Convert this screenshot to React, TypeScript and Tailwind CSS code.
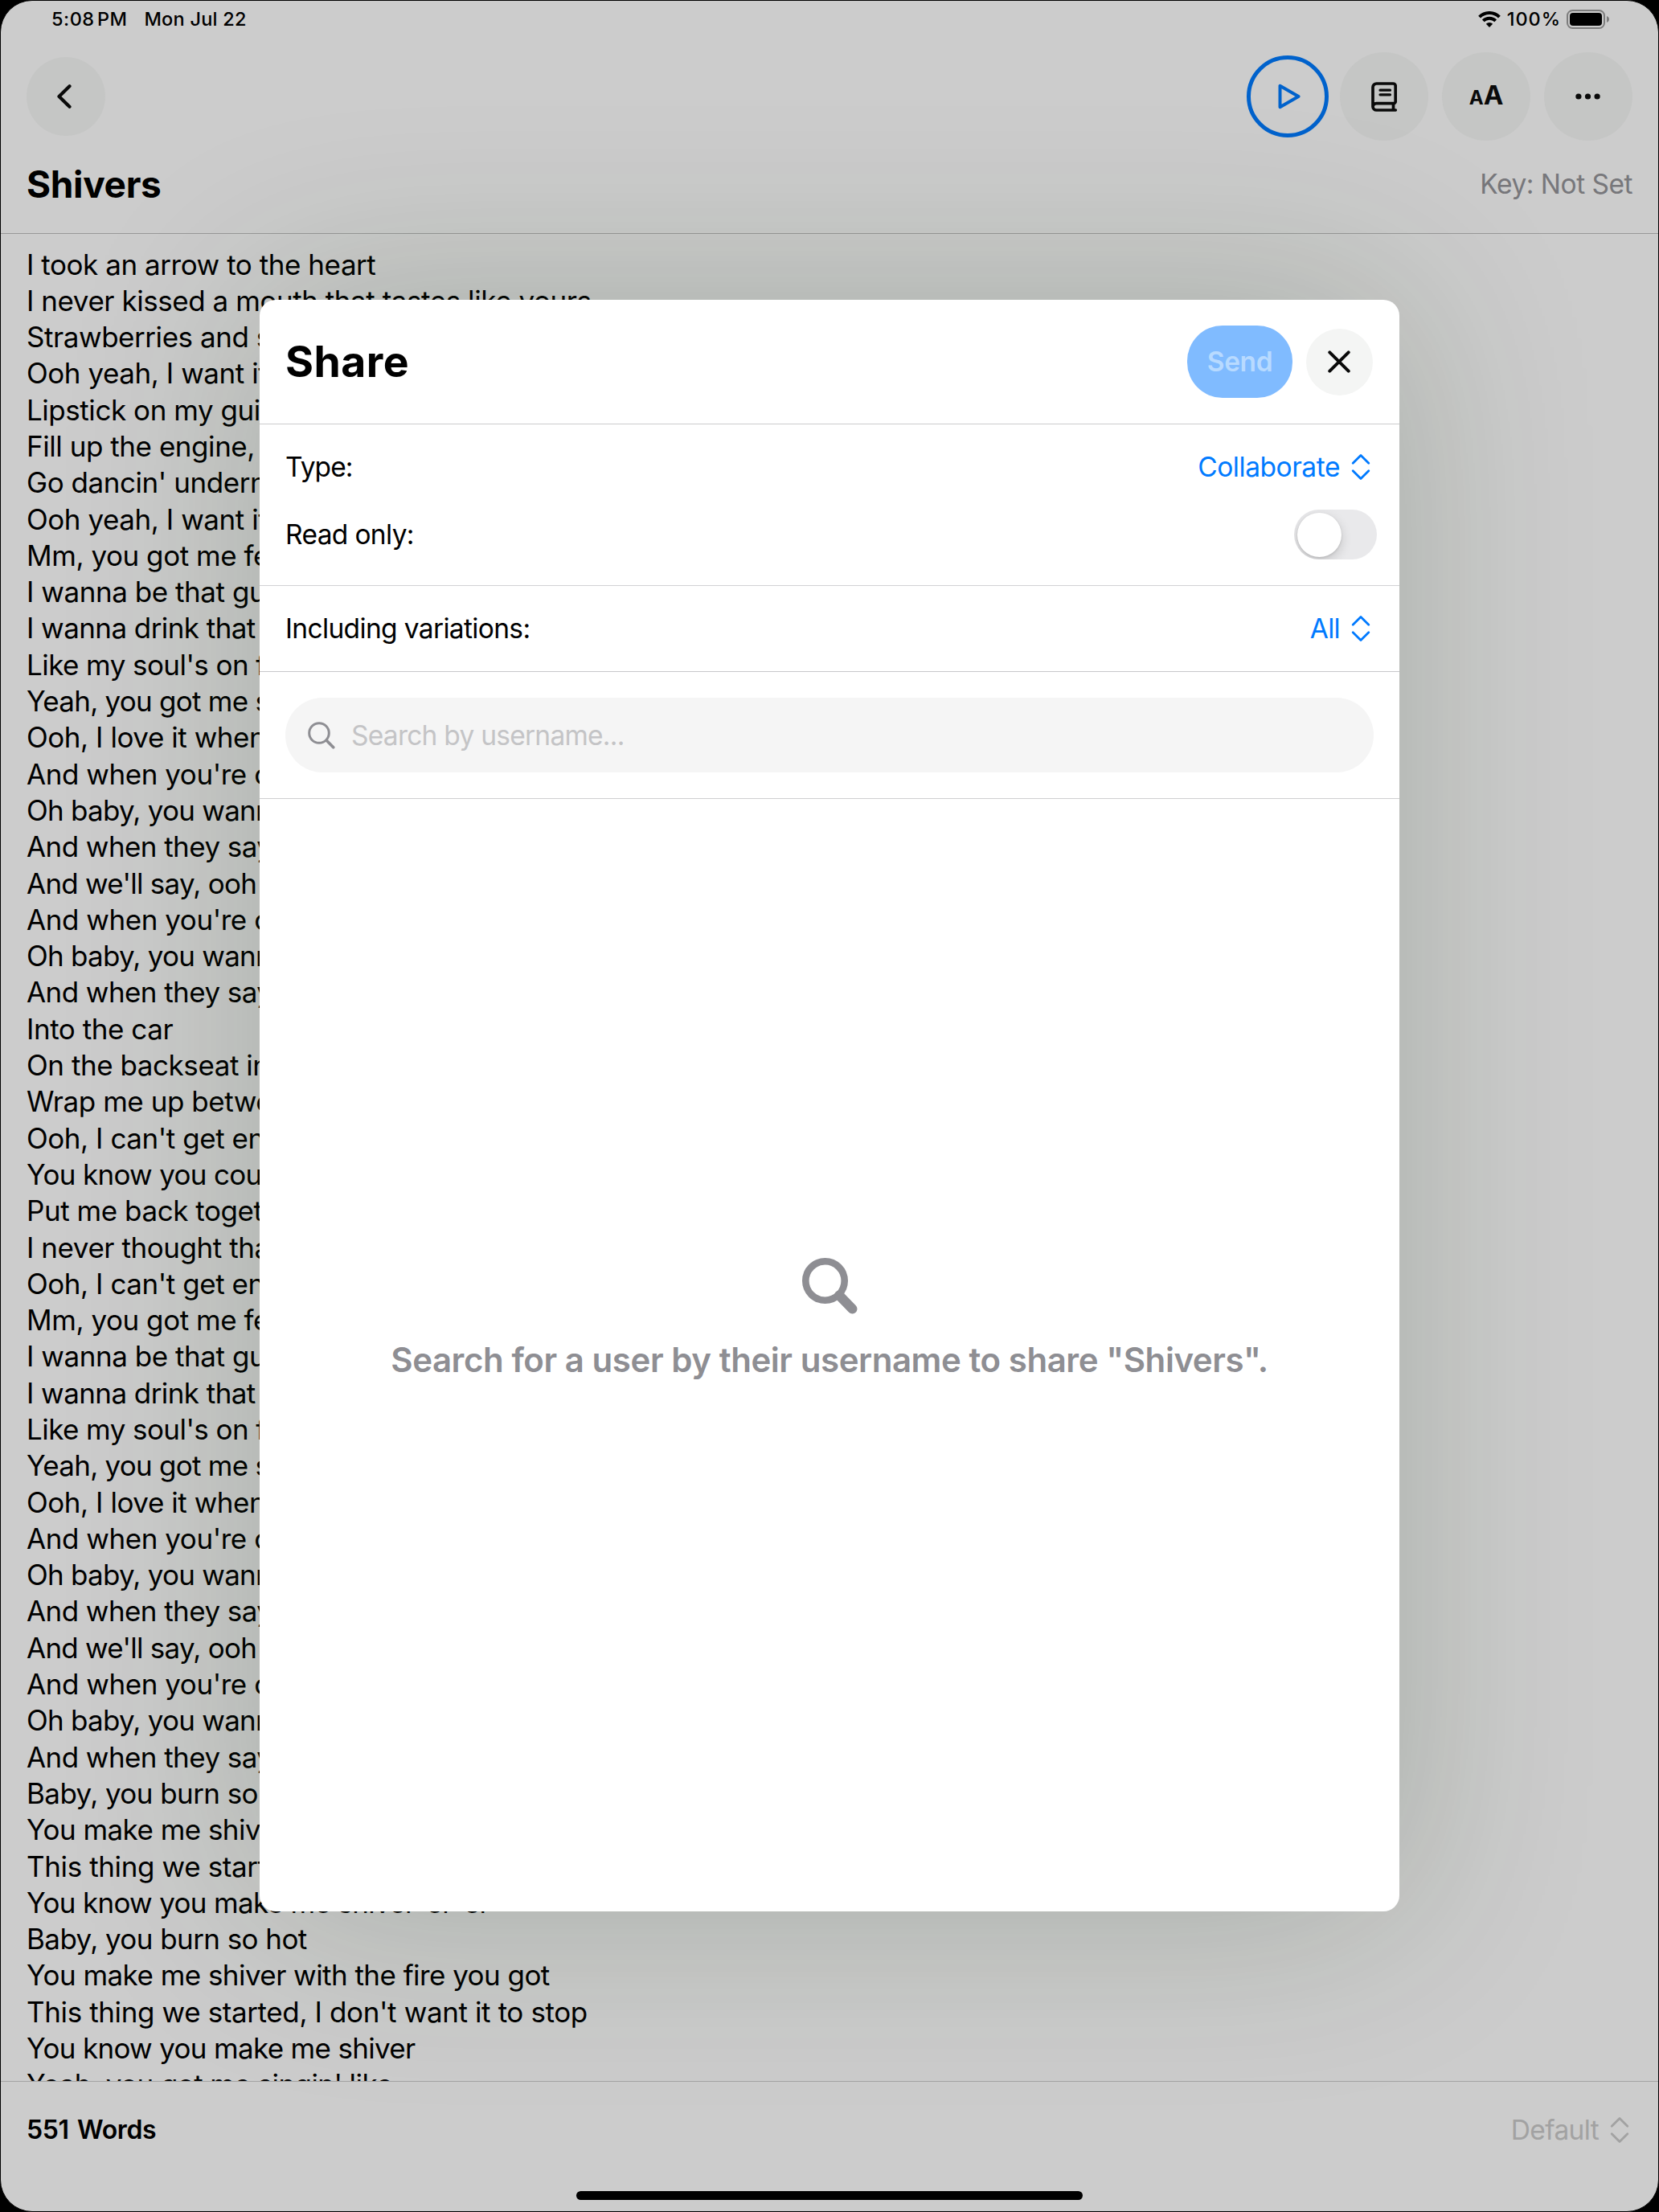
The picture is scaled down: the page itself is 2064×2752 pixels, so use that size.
import type { ReactNode } from "react";

const lyrics = [
  "I took an arrow to the heart",
  "I never kissed a mouth that tastes like yours",
  "Strawberries and s",
  "Ooh yeah, I want it",
  "Lipstick on my gui",
  "Fill up the engine,",
  "Go dancin' undern",
  "Ooh yeah, I want it",
  "Mm, you got me fe",
  "I wanna be that gu",
  "I wanna drink that",
  "Like my soul's on f",
  "Yeah, you got me s",
  "Ooh, I love it when",
  "And when you're c",
  "Oh baby, you wann",
  "And when they say",
  "And we'll say, ooh",
  "And when you're c",
  "Oh baby, you wann",
  "And when they say",
  "Into the car",
  "On the backseat in",
  "Wrap me up betwe",
  "Ooh, I can't get en",
  "You know you coul",
  "Put me back toget",
  "I never thought tha",
  "Ooh, I can't get en",
  "Mm, you got me fe",
  "I wanna be that gu",
  "I wanna drink that",
  "Like my soul's on f",
  "Yeah, you got me s",
  "Ooh, I love it when",
  "And when you're c",
  "Oh baby, you wann",
  "And when they say",
  "And we'll say, ooh",
  "And when you're c",
  "Oh baby, you wann",
  "And when they say",
  "Baby, you burn so",
  "You make me shive",
  "This thing we start",
  "You know you make me shiver-er-er",
  "Baby, you burn so hot",
  "You make me shiver with the fire you got",
  "This thing we started, I don't want it to stop",
  "You know you make me shiver",
  "Yeah, you got me singin' like",
];

function tracking(line: string) {
  if (line.startsWith("You know")) return "tracking-[-0.68px]";
  if (line.startsWith("You make")) return "tracking-[-0.55px]";
  if (line.startsWith("This")) return "tracking-[-0.38px]";
  if (/^(Oh baby|And we'll|Yeah, you got me s$)/.test(line)) return "tracking-[-0.75px]";
  if (/^(Yeah|Like|And when they|I wanna drink|Baby)/.test(line)) return "tracking-[-0.57px]";
  return "tracking-[-0.45px]";
}

function UpDown() {
  return (
    <svg width="24" height="34" viewBox="0 0 24 34" fill="none" stroke="currentColor" strokeWidth="2.8" strokeLinecap="round" strokeLinejoin="round">
      <path d="M2.2 12.2 12 2.4l9.8 9.8M2.2 21.8 12 31.6l9.8-9.8" />
    </svg>
  );
}

function RoundButton({ children }: { children: ReactNode }) {
  return (
    <button className="flex size-[110px] items-center justify-center rounded-full bg-[#c5c6c5]">{children}</button>
  );
}

function StatusBar() {
  return (
    <div className="flex h-[45px] items-center justify-between pl-[63px] pr-[61px] text-[23.5px] leading-[28px] font-medium">
      <div className="flex gap-[21px]">
        <span className="tracking-[0.5px] [word-spacing:-3.5px]">5:08 PM</span>
        <span className="tracking-[0.25px]">Mon Jul 22</span>
      </div>
      <div className="flex items-center">
        <svg width="28" height="20" viewBox="0 0 28 20" fill="none" stroke="#000" className="mr-[8px]">
          <path d="M1.6 7.1a17.6 17.6 0 0 1 24.8 0" strokeWidth="4" />
          <path d="M6.3 11.9a11 11 0 0 1 15.4 0" strokeWidth="3.8" />
          <path d="M14 20l-4.2-4.3a6 6 0 0 1 8.4 0z" fill="#000" stroke="none" />
        </svg>
        <span className="mr-[7px] tracking-[0.95px]">100%</span>
        <svg width="53" height="24" viewBox="0 0 53 24">
          <rect x="1" y="1" width="46" height="22" rx="6.5" fill="none" stroke="#7d7d7d" strokeWidth="2" />
          <rect x="4" y="4" width="40" height="16" rx="4" />
          <path d="M50 8v8c1.8-.7 3-2.2 3-4s-1.2-3.3-3-4z" fill="#7d7d7d" />
        </svg>
      </div>
    </div>
  );
}

function Toolbar() {
  return (
    <div className="flex h-[148px] items-center justify-between px-[32px]">
      <button className="flex size-[98px] items-center justify-center rounded-full bg-[#c5c6c5]">
        <svg width="18" height="30" viewBox="0 0 18 30" fill="none" stroke="#0a0a0a" strokeWidth="4.2" strokeLinecap="round" strokeLinejoin="round" className="-ml-[4px]">
          <path d="M15.5 2.3 2.5 15l13 12.7" />
        </svg>
      </button>
      <div className="flex items-center">
        <button className="mr-[14px] flex size-[102px] items-center justify-center rounded-full border-[5px] border-[#0062cc] text-[#0062cc]">
          <svg width="28" height="32" viewBox="0 0 28 32" fill="none" stroke="currentColor" strokeWidth="4" strokeLinejoin="round" className="ml-[4px]">
            <path d="M2.5 2.8v26.4L25.5 16z" />
          </svg>
        </button>
        <div className="flex gap-[17px]">
          <RoundButton>
            <svg width="32" height="37" viewBox="0 0 32 37" fill="none" stroke="#0a0a0a" strokeWidth="3.7" strokeLinecap="round" strokeLinejoin="round">
              <path d="M30.2 35H6.5a4.5 4.5 0 0 1-4.5-4.5V6.5A4.5 4.5 0 0 1 6.5 2h20.7a3 3 0 0 1 3 3v19.2a2.5 2.5 0 0 1-2.5 2.5H6.5A4.3 4.3 0 0 0 2 31" />
              <path d="M27.5 27v7.5" strokeLinecap="butt" />
              <path d="M11 10.2h12.5M11 15.8h12.5" strokeWidth="3.2" />
            </svg>
          </RoundButton>
          <RoundButton>
            <span className="flex items-baseline font-bold leading-[36px] text-[#0a0a0a]">
              <span className="text-[24px]">A</span>
              <span className="text-[33px]">A</span>
            </span>
          </RoundButton>
          <RoundButton>
            <svg width="31" height="8" viewBox="0 0 31 8" fill="#0a0a0a" className="mr-[1px]">
              <circle cx="3.9" cy="4" r="3.6" />
              <circle cx="15.5" cy="4" r="3.6" />
              <circle cx="27.1" cy="4" r="3.6" />
            </svg>
          </RoundButton>
        </div>
      </div>
    </div>
  );
}

function ShareDialog() {
  return (
    <div className="flex h-[2005px] w-[1418px] flex-col overflow-hidden rounded-[20px] bg-white text-[33.5px] leading-[42px] text-black">
      <div className="flex h-[155px] items-center justify-between border-b border-[#cbcbcd] pl-[32px] pr-[33px]">
        <h2 className="text-[53.5px] leading-[64px] font-bold tracking-[0.45px]">Share</h2>
        <div className="flex items-center gap-[17px]">
          <button className="flex h-[90px] w-[131px] items-center justify-center rounded-[44px] bg-[#80bbff] font-semibold tracking-[-0.4px] text-[#b8daff]">
            Send
          </button>
          <button className="flex size-[83px] items-center justify-center rounded-full bg-[#f4f5f4]">
            <svg width="28" height="28" viewBox="0 0 28 28" stroke="#0a0a0a" strokeWidth="4" strokeLinecap="round" className="mr-[1px]">
              <path d="M2.3 2.3l23.4 23.4M25.7 2.3 2.3 25.7" />
            </svg>
          </button>
        </div>
      </div>

      <div className="flex h-[201px] flex-col border-b border-[#d2d2d4] pt-[10px]">
        <div className="flex h-[85px] items-center justify-between pl-[32px] pr-[36px]">
          <span className="tracking-[-0.9px]">Type:</span>
          <div className="flex items-center gap-[14px] text-[#007aff]">
            <span className="tracking-[-0.45px]">Collaborate</span>
            <UpDown />
          </div>
        </div>
        <div className="flex h-[84px] items-center justify-between pl-[32px] pr-[28px]">
          <span className="tracking-[-0.65px]">Read only:</span>
          <div className="flex h-[62px] w-[103px] items-center overflow-hidden rounded-full bg-[#e9e9eb] pl-[4px]">
            <div className="size-[55px] rounded-full bg-white shadow-[0_5px_14px_rgba(0,0,0,0.16),0_1px_3px_rgba(0,0,0,0.12)]" />
          </div>
        </div>
      </div>

      <div className="flex h-[107px] items-center justify-between border-b border-[#c8c8ca] pl-[32px] pr-[36px]">
        <span className="tracking-[-0.65px]">Including variations:</span>
        <div className="flex items-center gap-[14px] text-[#007aff]">
          <span className="tracking-[-0.7px]">All</span>
          <UpDown />
        </div>
      </div>

      <div className="border-b border-[#cfcfd1] px-[32px] py-[32px]">
        <div className="flex h-[93px] items-center gap-[20px] rounded-[47px] bg-[#f5f5f5] pl-[28px]">
          <svg width="34" height="34" viewBox="0 0 34 34" fill="none" stroke="#8e8e93" strokeLinecap="round">
            <circle cx="14" cy="14" r="12.3" strokeWidth="3" />
            <path d="M23.3 23.3l8.4 8.4" strokeWidth="3.7" />
          </svg>
          <span className="tracking-[-0.75px] text-[#c4c4c6]">Search by username...</span>
        </div>
      </div>

      <div className="flex flex-col items-center pt-[571px] text-[#8e8e93]">
        <svg width="69" height="70" viewBox="0 0 69 70" fill="none" stroke="currentColor" strokeLinecap="round">
          <circle cx="28.5" cy="28.5" r="24.2" strokeWidth="8.6" />
          <path d="M46 46.5l16.5 17" strokeWidth="12" />
        </svg>
        <p className="mt-[31px] text-[42px] leading-[52px] font-semibold tracking-[-0.44px]">
          Search for a user by their username to share "Shivers".
        </p>
      </div>
    </div>
  );
}

export default function App() {
  return (
    <div className="relative h-[2752px] w-[2064px] overflow-hidden bg-black font-['Inter',sans-serif] text-black">
      <div className="flex h-full flex-col overflow-hidden rounded-[40px] border border-black bg-[#ccc]">
        <StatusBar />
        <Toolbar />
        <div className="flex h-[97px] items-start justify-between border-b border-[#999] px-[32px]">
          <h1 className="text-[46px] leading-[70px] font-bold tracking-[-0.35px]">Shivers</h1>
          <span className="text-[33.5px] leading-[71px] tracking-[-0.5px] text-[#77777b]">Key: Not Set</span>
        </div>
        <div className="min-h-0 flex-1 overflow-hidden pl-[32px] pt-[15.5px] text-[35px] leading-[45.3px]">
          {lyrics.map((line, i) => (
            <p key={i} className={`whitespace-nowrap ${tracking(line)}`}>
              {line}
            </p>
          ))}
        </div>
        <div className="flex h-[162px] flex-col items-center border-t border-[#a3a3a3]">
          <div className="flex h-[120px] w-full items-center justify-between pl-[32px] pr-[36px]">
            <span className="text-[32px] leading-[40px] font-semibold tracking-[-0.35px] [word-spacing:2.5px]">551 Words</span>
            <div className="flex items-center gap-[14px] text-[#a2a2a2]">
              <span className="text-[33.5px] leading-[42px] tracking-[-0.65px]">Default</span>
              <UpDown />
            </div>
          </div>
          <div className="mt-[16px] h-[11px] w-[630px] rounded-full bg-black" />
        </div>
      </div>
      <div className="absolute inset-0 flex items-center justify-center overflow-hidden rounded-[40px] pb-px">
        <div className="rounded-[20px] shadow-[0_0_250px_rgba(20,50,16,0.2)]">
          <ShareDialog />
        </div>
      </div>
    </div>
  );
}
